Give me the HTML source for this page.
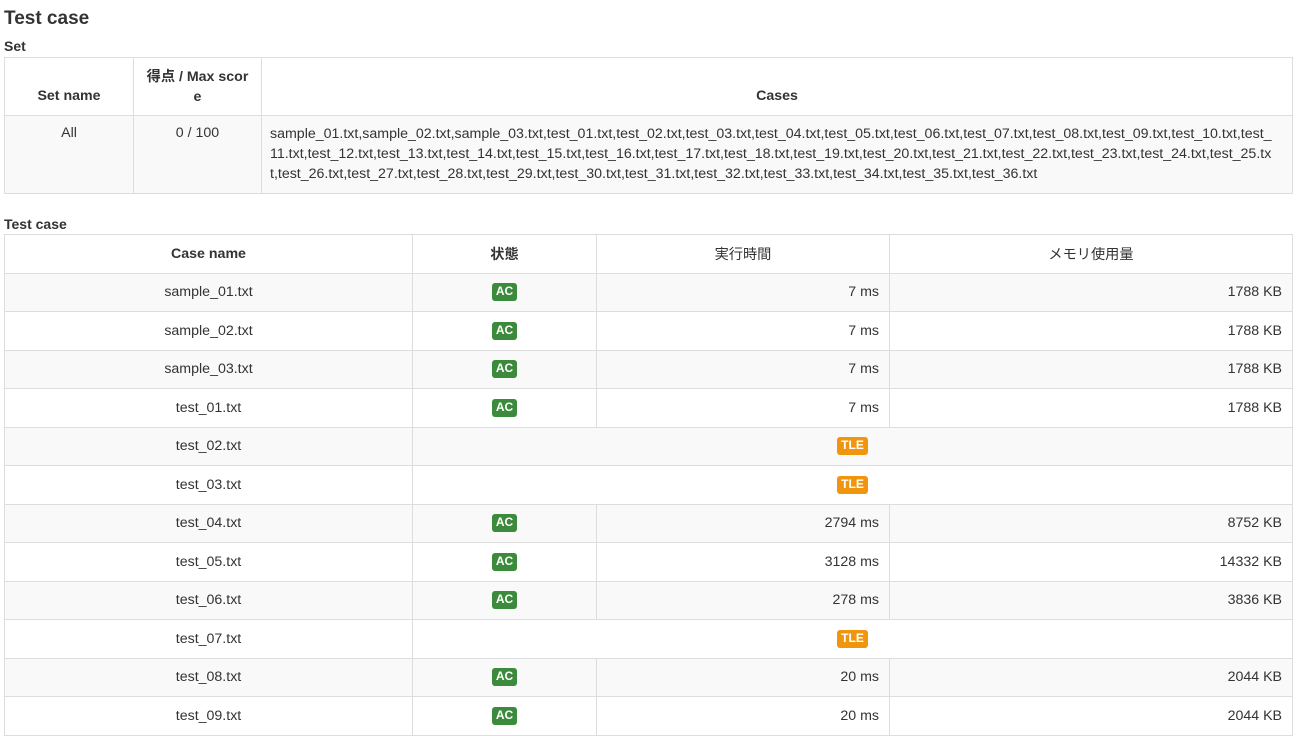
<!DOCTYPE html>
<html><head><meta charset="utf-8"><style>
body{margin:0;background:#fff;font-family:"Liberation Sans","Noto Sans CJK JP",sans-serif;color:#333;font-size:14.2px;}
h1{position:absolute;left:4px;top:8px;margin:0;font-size:19px;font-weight:bold;}
.lbl{position:absolute;left:4px;margin:0;font-size:14px;font-weight:bold;}
table{position:absolute;left:4px;width:1289px;border-collapse:collapse;table-layout:fixed;}
td,th{border:1px solid #ddd;padding:0 8px;text-align:center;}
th{font-weight:bold;}
tr.s td{background:#f9f9f9;}
.r{text-align:right;padding-right:10px;}
.ac{display:inline-block;background:#3c8b3c;color:#fff;font-weight:bold;font-size:12px;padding:2px 4px 3px;border-radius:3px;line-height:13px;}
.tle{display:inline-block;background:#f0960e;color:#fff;font-weight:bold;font-size:12px;padding:2px 4px 3px;border-radius:3px;line-height:13px;}
#t2 td,#t2 th{height:37.5px;padding-top:0;padding-bottom:0;}
#t2 th.n{font-weight:normal;}
</style></head><body>
<h1>Test case</h1>
<div class="lbl" style="top:38px">Set</div>
<table style="top:57px;border:1px solid #ddd">
<colgroup><col style="width:129px"><col style="width:128px"><col></colgroup>
<tr style="height:58px"><th style="vertical-align:bottom;padding-bottom:11px">Set name</th><th style="line-height:20px">得点 / Max scor<br>e</th><th style="vertical-align:bottom;padding-bottom:11px">Cases</th></tr>
<tr class="s" style="height:78px"><td style="vertical-align:top;padding-top:9px">All</td><td style="vertical-align:top;padding-top:9px">0 / 100</td><td style="text-align:left;vertical-align:top;padding-top:8px;line-height:20px;white-space:nowrap">sample_01.txt,sample_02.txt,sample_03.txt,test_01.txt,test_02.txt,test_03.txt,test_04.txt,test_05.txt,test_06.txt,test_07.txt,test_08.txt,test_09.txt,test_10.txt,test_<br>11.txt,test_12.txt,test_13.txt,test_14.txt,test_15.txt,test_16.txt,test_17.txt,test_18.txt,test_19.txt,test_20.txt,test_21.txt,test_22.txt,test_23.txt,test_24.txt,test_25.tx<br>t,test_26.txt,test_27.txt,test_28.txt,test_29.txt,test_30.txt,test_31.txt,test_32.txt,test_33.txt,test_34.txt,test_35.txt,test_36.txt</td></tr>
</table>
<div class="lbl" style="top:216px">Test case</div>
<table id="t2" style="top:234px">
<colgroup><col style="width:408px"><col style="width:184px"><col style="width:293px"><col></colgroup>
<tr><th>Case name</th><th>状態</th><th class="n">実行時間</th><th class="n">メモリ使用量</th></tr>
<tr class="s"><td>sample_01.txt</td><td><span class="ac">AC</span></td><td class="r">7 ms</td><td class="r">1788 KB</td></tr>
<tr><td>sample_02.txt</td><td><span class="ac">AC</span></td><td class="r">7 ms</td><td class="r">1788 KB</td></tr>
<tr class="s"><td>sample_03.txt</td><td><span class="ac">AC</span></td><td class="r">7 ms</td><td class="r">1788 KB</td></tr>
<tr><td>test_01.txt</td><td><span class="ac">AC</span></td><td class="r">7 ms</td><td class="r">1788 KB</td></tr>
<tr class="s"><td>test_02.txt</td><td colspan="3"><span class="tle">TLE</span></td></tr>
<tr><td>test_03.txt</td><td colspan="3"><span class="tle">TLE</span></td></tr>
<tr class="s"><td>test_04.txt</td><td><span class="ac">AC</span></td><td class="r">2794 ms</td><td class="r">8752 KB</td></tr>
<tr><td>test_05.txt</td><td><span class="ac">AC</span></td><td class="r">3128 ms</td><td class="r">14332 KB</td></tr>
<tr class="s"><td>test_06.txt</td><td><span class="ac">AC</span></td><td class="r">278 ms</td><td class="r">3836 KB</td></tr>
<tr><td>test_07.txt</td><td colspan="3"><span class="tle">TLE</span></td></tr>
<tr class="s"><td>test_08.txt</td><td><span class="ac">AC</span></td><td class="r">20 ms</td><td class="r">2044 KB</td></tr>
<tr><td>test_09.txt</td><td><span class="ac">AC</span></td><td class="r">20 ms</td><td class="r">2044 KB</td></tr>
</table>
</body></html>
